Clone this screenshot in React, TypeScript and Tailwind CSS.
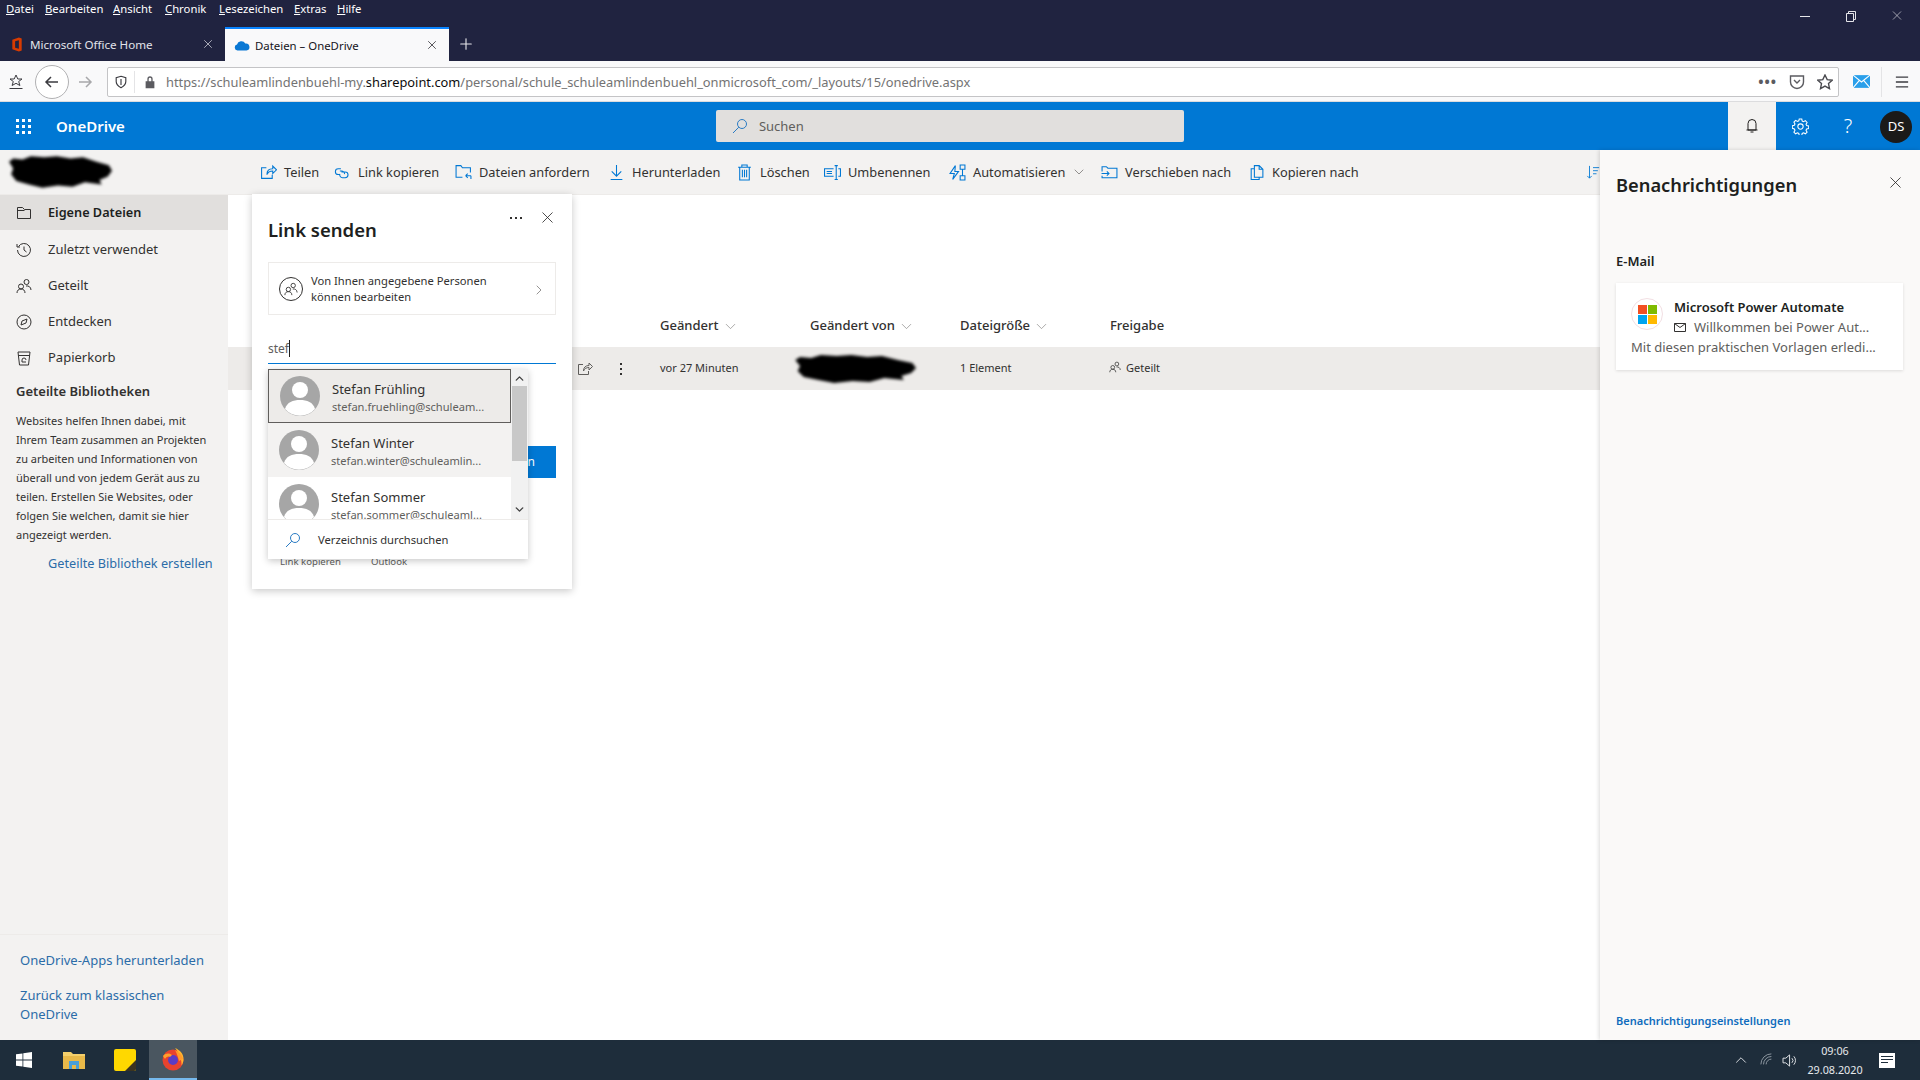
import { ChevronDown, ChevronRight, ChevronUp, Plus, X } from "lucide-react"

const font = "font-['Noto_Sans',sans-serif]"

const Ico = ({ d, className = "w-[17px] h-[17px] text-[#0078d4]" }: { d: string; className?: string }) => (
    <svg viewBox="0 0 16 16" fill="none" stroke="currentColor" strokeWidth="1" className={`shrink-0 ${className}`}>
        <path d={d} />
    </svg>
)

// scribbled-over areas of the screenshot
const Redacted = ({ className }: { className: string }) => (
    <svg viewBox="0 0 100 30" preserveAspectRatio="none" className={`shrink-0 blur-[1.5px] ${className}`}>
        <path d="M1 6L5 3 14 4 22 1 35 2 47 1 60 3 72 2 85 6 97 9 100 14 96 19 88 22 90 26 74 24 62 28 48 27 33 29 20 26 8 23 3 17 5 12z" fill="#000" />
    </svg>
)

const icons = {
    share: "M6 3.500H1.500v10h10V10M6.500 10c0-3.500 2-5.500 5.500-5.500V2l3.500 3.500L12 9V6.500c-2.500 0-4.500 1-5.500 3.500z",
    link: "M6.500 4.500H4a2.700 2.700 0 0 0 0 5.400h1M7 7.500h3.500a2.700 2.700 0 0 1 0 5.400H8a2.700 2.700 0 0 1-2.500-3.500M5.500 6.500h2a2.700 2.700 0 0 1 2.400 3",
    request: "M14.500 8V3.500H7L5.500 1.500h-4.500v11h6M15 11H10M10 11l2-2M10 11l2 2M15 11v3",
    download: "M8 1v10M3.500 7L8 11.500 12.500 7M2.500 14.500h11",
    trash: "M2 3h12M5.500 3V1h5v2M3.500 3v12h9V3M6 5.500v7M8 5.500v7M10 5.500v7",
    rename: "M10 1.500h3M11.500 1.500v13M10 14.500h3M9 4.500H.500v7H9M2.500 7h5M2.500 9h5M13.500 4.500h2v7h-2",
    auto: "M6 1.500L1 9h4l-1.500 5.500L9 7H5.500zM10.500 1h4.500v4h-4.500zM10.500 11h4.500v4h-4.500zM12.700 5v6",
    move: "M1 7V2.500h4l1.500 1.500h8.500v9H1v-2M.500 9h7M5.500 7l2 2-2 2",
    copy: "M6 1.500h4.500l3.500 3.500v7.500H6zM10.500 1.500V5H14M6 4.500H3v10h7.500v-2",
    sort: "M4 1v14M1.500 12.500L4 15l2.500-2.500M8 3h7M8 6.500h5.500M8 10h4",
    folder: "M1.500 13.500v-11h5l2 2h6v9z M1.500 5.500h7",
    clock: "M2.500 4.500A6.500 6.500 0 1 1 1.500 8M1 2v3h3M8 4.500V8l2.500 2",
    people: "M10.500 1.500a2.500 2.500 0 1 1 0 5 2.500 2.500 0 0 1 0-5zM5 6a2.500 2.500 0 1 1 0 5 2.500 2.500 0 0 1 0-5zM1 15c0-2.500 1.500-4 4-4s4 1.500 4 4M10 8c2.500-.5 5 1 5 4",
    compass: "M8 1a7 7 0 1 1 0 14A7 7 0 0 1 8 1zM5 11l1-4 5-2-1 4z",
    bin: "M2 2h12l-1.500 13h-9zM2.500 5.500h11M6 10a2 2 0 0 1 4 0M6 10v2h4",
    search: "M10 1.500a4.500 4.500 0 1 1 0 9 4.500 4.500 0 0 1 0-9zM6.800 9.200L1 15",
}

const menu = [
    { first: "D", rest: "atei", cls: "w-[39px]" },
    { first: "B", rest: "earbeiten", cls: "w-[68px]" },
    { first: "A", rest: "nsicht", cls: "w-[52px]" },
    { first: "C", rest: "hronik", cls: "w-[54px]" },
    { first: "L", rest: "esezeichen", cls: "w-[75px]" },
    { first: "E", rest: "xtras", cls: "w-[43px]" },
    { first: "H", rest: "ilfe", cls: "w-[40px]" },
]

const commands = [
    { label: "Teilen", icon: icons.share, cls: "w-[74px]" },
    { label: "Link kopieren", icon: icons.link, cls: "w-[121px]" },
    { label: "Dateien anfordern", icon: icons.request, cls: "w-[153px]" },
    { label: "Herunterladen", icon: icons.download, cls: "w-[128px]" },
    { label: "Löschen", icon: icons.trash, cls: "w-[88px]" },
    { label: "Umbenennen", icon: icons.rename, cls: "w-[125px]" },
    { label: "Automatisieren", icon: icons.auto, cls: "w-[152px]", more: true },
    { label: "Verschieben nach", icon: icons.move, cls: "w-[147px]" },
    { label: "Kopieren nach", icon: icons.copy, cls: "w-[120px]" },
]

const nav = [
    { label: "Zuletzt verwendet", icon: icons.clock },
    { label: "Geteilt", icon: icons.people },
    { label: "Entdecken", icon: icons.compass },
    { label: "Papierkorb", icon: icons.bin },
]

const columns = [
    { label: "Geändert", cls: "w-[150px]", sort: true },
    { label: "Geändert von", cls: "w-[150px]", sort: true },
    { label: "Dateigröße", cls: "w-[150px]", sort: true },
    { label: "Freigabe", cls: "w-[150px]", sort: false },
]

const people = [
    { name: "Stefan Frühling", mail: "stefan.fruehling@schuleam...", cls: "bg-[#edebe9] border border-[#605e5c]" },
    { name: "Stefan Winter", mail: "stefan.winter@schuleamlin...", cls: "bg-[#f3f2f1]" },
    { name: "Stefan Sommer", mail: "stefan.sommer@schuleaml...", cls: "bg-white" },
]

const Avatar = () => (
    <svg viewBox="0 0 40 40" className="w-10 h-10 shrink-0">
        <circle cx="20" cy="20" r="20" fill="#a6a6a6" />
        <circle cx="20" cy="14" r="8" fill="#fff" />
        <path d="M5 33c2-7 8-9 15-9s13 2 15 9a20 20 0 0 1-30 0z" fill="#fff" />
    </svg>
)

const BrowserChrome = () => (
    <div className="shrink-0">
        <div className="bg-[#202340] h-[61px] relative">
            <div className="flex h-[27px] items-start justify-between">
                <div className="flex pl-[6px] pt-[1px] text-[11.3px] text-white">
                    {menu.map(m => (
                        <span key={m.first} className={m.cls}><span className="underline">{m.first}</span>{m.rest}</span>
                    ))}
                </div>
                <div className="flex items-center text-[#e6e6ea] pt-[8px]">
                    <svg viewBox="0 0 12 12" stroke="currentColor" className="w-[46px] h-[12px]"><path d="M1 6.500h10" /></svg>
                    <svg viewBox="0 0 12 12" fill="none" stroke="currentColor" className="w-[46px] h-[12px]"><path d="M1.500 3.500h7v8h-7zM3.500 3.500v-2h7v8h-2" /></svg>
                    <X size={15} strokeWidth={1} className="w-[46px]" />
                </div>
            </div>
            <div className="flex h-[34px] items-stretch">
                <div className="w-[225px] flex items-center pl-[11px] text-[11.6px] text-[#e2e3ea]">
                    <svg viewBox="0 0 12 16" className="w-[12px] h-[15px] mr-[7px]"><path d="M1 3l7-2.500 3 1v13l-3 1-7-2.500z" fill="#d83b01" /><path d="M4 4.500l4-1v9l-4-1z" fill="#202340" /></svg>
                    <span className="mt-[2px]">Microsoft Office Home</span>
                    <X size={14} strokeWidth={1.2} className="ml-auto mr-[10px]" />
                </div>
                <div className="w-[224px] bg-[#f9f9fa] border-t-2 border-[#0a84ff] flex items-center pl-[9px] text-[11.4px] text-[#15141a]">
                    <svg viewBox="0 0 16 11" className="w-[16px] h-[11px] mr-[5px]"><path d="M3.500 10.500A3 3 0 0 1 3 4.600 4.500 4.500 0 0 1 11.300 3.500 3.500 3.500 0 0 1 12.500 10.500z" fill="#0a78d4" /></svg>
                    <span className="mt-[1px]">Dateien – OneDrive</span>
                    <X size={14} strokeWidth={1.2} className="ml-auto mr-[10px]" />
                </div>
                <div className="w-[34px] flex items-center justify-center text-[#e6e6ea]"><Plus size={18} strokeWidth={1.5} /></div>
            </div>
        </div>
        <div className="h-[41px] bg-[#f9f9fa] flex items-center pl-[8px] pr-[11px] pt-[1px] text-[#3b3b40] border-b border-[#dcdcde]">
            <svg viewBox="0 0 16 16" fill="none" stroke="currentColor" className="w-[16px] h-[16px]"><path d="M8 1l1.800 4H14l-3.300 2.500 1.200 4L8 9.300 4.100 11.500l1.200-4L2 5h4.200zM1.500 14.500h13" /></svg>
            <div className="ml-[11px] w-[34px] h-[34px] rounded-full border border-[#b1b1b3] bg-white flex items-center justify-center">
                <svg viewBox="0 0 16 16" fill="none" stroke="currentColor" strokeWidth="1.500" className="w-[16px] h-[16px]"><path d="M14 8H2M7 3L2 8l5 5" /></svg>
            </div>
            <svg viewBox="0 0 16 16" fill="none" stroke="#a8a8ab" strokeWidth="1.500" className="ml-[8px] w-[16px] h-[16px]"><path d="M2 8h12M9 3l5 5-5 5" /></svg>
            <div className="ml-[14px] flex-1 h-[30px] rounded-[2px] border border-[#c4c4c6] bg-white flex items-center">
                <svg viewBox="0 0 16 16" fill="none" stroke="currentColor" strokeWidth="1.300" className="ml-[6px] w-[14px] h-[14px]"><path d="M8 1.500l5.500 1.500v4.500c0 3-2.500 5.500-5.500 7-3-1.500-5.500-4-5.500-7V3zM8 4.500v7" /></svg>
                <div className="ml-[6px] w-px h-[22px] bg-[#e4e4e6]" />
                <svg viewBox="0 0 16 16" fill="#5b5b60" className="ml-[8px] w-[14px] h-[14px]"><path d="M3 7h10v8H3zM5 7V4.500a3 3 0 0 1 6 0V7H9.500V4.500a1.500 1.500 0 0 0-3 0V7z" /></svg>
                <div className="ml-[9px] mt-[2px] flex-1 text-[12.850px] text-[#737373] whitespace-nowrap">
                    https://schuleamlindenbuehl-my.<span className="text-[#0c0c0d]">sharepoint.com</span>/personal/schule_schuleamlindenbuehl_onmicrosoft_com/_layouts/15/onedrive.aspx
                </div>
                <span className="text-[#5b5b60] text-[14px] font-bold tracking-[1px] mr-[12px]">•••</span>
                <svg viewBox="0 0 16 16" fill="none" stroke="#5b5b60" strokeWidth="1.400" className="w-[16px] h-[16px] mr-[12px]"><path d="M1.500 2h13v6a6.500 6.500 0 0 1-13 0zM5 6l3 3 3-3" /></svg>
                <svg viewBox="0 0 16 16" fill="none" stroke="#4a4a4f" strokeWidth="1.400" className="w-[16px] h-[16px] mr-[5px]"><path d="M8 1l2.200 4.600 5 .6-3.700 3.400 1 5L8 12.100 3.500 14.600l1-5L.800 6.200l5-.6z" /></svg>
            </div>
            <svg viewBox="0 0 16 12" className="ml-[14px] w-[17px] h-[13px]"><path d="M0 0h16v12H0z" fill="#2a9fea" /><path d="M0 0l8 6.500L16 0M0 12l6-7M16 12l-6-7" fill="none" stroke="#fff" /></svg>
            <div className="ml-[11px] w-px h-[30px] bg-[#e4e4e6]" />
            <svg viewBox="0 0 16 16" stroke="#3b3b40" strokeWidth="1.500" className="ml-[13px] w-[14px] h-[16px]"><path d="M1 2.500h14M1 8h14M1 13.500h14" /></svg>
        </div>
    </div>
)

const SuiteBar = () => (
    <div className="h-[48px] shrink-0 bg-[#0078d4] flex items-center text-white relative">
        <div className="grid grid-cols-3 gap-[3px] ml-[16px] w-[15px]">
            {Array.from({ length: 9 }).map((_, i) => <span key={i} className="w-[3px] h-[3px] bg-white" />)}
        </div>
        <span className="ml-[25px] text-[15px] font-semibold">OneDrive</span>
        <div className="ml-[591px] w-[468px] h-[32px] rounded-[2px] bg-[#e1dfdd] flex items-center pl-[16px] text-[13px] text-[#605e5c]">
            <Ico d={icons.search} className="w-4 h-4 text-[#2b7cc4]" />
            <span className="ml-[11px] mt-[2px]">Suchen</span>
        </div>
        <div className="ml-auto flex items-stretch h-full">
            <div className="w-[48px] bg-[#f3f2f1] flex items-center justify-center">
                <svg viewBox="0 0 16 16" fill="none" stroke="#201f1e" className="w-4 h-4"><path d="M4 12V5.500a4 4 0 0 1 8 0V12zM2.500 12h11M6.500 14h3" /></svg>
            </div>
            <div className="w-[48px] flex items-center justify-center">
                <svg viewBox="0 0 16 16" fill="none" stroke="#fff" className="w-[17px] h-[17px]"><path d="M8 5.500a2.500 2.500 0 1 1 0 5 2.500 2.500 0 0 1 0-5zM6.800 1h2.400l.4 1.900 1.300.6 1.700-1 1.600 1.700-1 1.700.6 1.200 1.900.4v2.400l-1.900.4-.6 1.300 1 1.700-1.600 1.600-1.700-1-1.300.6-.4 1.900H6.800l-.4-1.900-1.300-.6-1.700 1-1.600-1.600 1-1.700-.6-1.300L.3 9.600V7.200l1.900-.4.6-1.200-1-1.700 1.600-1.700 1.700 1 1.300-.6z" /></svg>
            </div>
            <div className="w-[48px] flex items-center justify-center text-[20px] font-light">?</div>
            <div className="w-[48px] flex items-center justify-center">
                <span className="w-8 h-8 rounded-full bg-[#1b1a19] flex items-center justify-center text-[13px] mt-[1px]">DS</span>
            </div>
        </div>
    </div>
)

const CommandBar = () => (
    <div className="h-[45px] shrink-0 bg-[#f3f2f1] border-b border-[#edebe9] flex items-center relative text-[12.800px] text-[#323130]">
        <Redacted className="w-[104px] h-[34px] ml-[8px]" />
        <div className="ml-[148px] flex items-center">
            {commands.map(c => (
                <div key={c.label} className={`flex items-center gap-[7px] ${c.cls}`}>
                    <Ico d={c.icon} />
                    <span className="whitespace-nowrap mt-[2px]">{c.label}</span>
                    {c.more && <ChevronDown size={16} strokeWidth={1} className="-ml-[1px] text-[#605e5c]" />}
                </div>
            ))}
        </div>
        <Ico d={icons.sort} className="ml-auto w-[14px] h-4 text-[#0078d4]" />
    </div>
)

const Sidebar = () => (
    <aside className="w-[228px] shrink-0 bg-[#f3f2f1] flex flex-col justify-between text-[#323130]">
        <div>
            <div className="h-[35px] bg-[#e1dfdd] flex items-center gap-[16px] pl-[16px] text-[12.7px] font-semibold text-[#201f1e]">
                <Ico d={icons.folder} className="w-4 h-4 text-[#323130]" />
                Eigene Dateien
            </div>
            <ul className="pt-[2px]">
                {nav.map(n => (
                    <li key={n.label} className="h-[36px] flex items-center gap-[16px] pl-[16px] text-[13px]">
                        <Ico d={n.icon} className="w-4 h-4 text-[#323130]" />
                        {n.label}
                    </li>
                ))}
            </ul>
            <h3 className="pl-[16px] mt-[5px] text-[13px] font-semibold leading-[20px]">Geteilte Bibliotheken</h3>
            <p className="pl-[16px] pr-[10px] mt-[10px] text-[11px] leading-[19px]">
                Websites helfen Ihnen dabei, mit<br />
                Ihrem Team zusammen an Projekten<br />
                zu arbeiten und Informationen von<br />
                überall und von jedem Gerät aus zu<br />
                teilen. Erstellen Sie Websites, oder<br />
                folgen Sie welchen, damit sie hier<br />
                angezeigt werden.
            </p>
            <div className="mt-[10px] pl-[48px] text-[12.7px] text-[#2b6ca8] whitespace-nowrap">Geteilte Bibliothek erstellen</div>
        </div>
        <div className="border-t border-[#edebe9] pl-[20px] pt-[16px] pb-[16px] text-[13px] leading-[19px] text-[#2b6ca8]">
            <div>OneDrive-Apps herunterladen</div>
            <div className="mt-[16px]">Zurück zum klassischen<br />OneDrive</div>
        </div>
    </aside>
)

const FileTable = () => (
    <main className="flex-1 bg-white pt-[110px]">
        <div className="h-[42px] flex items-center pl-[432px] text-[13px] text-[#323130]">
            {columns.map(c => (
                <div key={c.label} className={`flex items-center gap-[3px] ${c.cls}`}>
                    <span className="font-medium">{c.label}</span>
                    {c.sort && <ChevronDown size={17} strokeWidth={1} className="text-[#8a8886]" />}
                </div>
            ))}
        </div>
        <div className="h-[43px] bg-[#edebe9] flex items-center text-[11px] text-[#323130]">
            <div className="w-[432px] flex items-center pl-[349px] text-[#605e5c]">
                <Ico d={icons.share} className="w-4 h-4 text-[#605e5c]" />
                <span className="ml-[27px] flex flex-col gap-[3px]">
                    <i className="w-[2px] h-[2px] bg-[#323130]" /><i className="w-[2px] h-[2px] bg-[#323130]" /><i className="w-[2px] h-[2px] bg-[#323130]" />
                </span>
            </div>
            <div className="w-[150px]">vor 27 Minuten</div>
            <div className="w-[150px]"><Redacted className="w-[122px] h-[30px] -ml-[16px]" /></div>
            <div className="w-[150px]">1 Element</div>
            <div className="w-[150px] flex items-center gap-[6px]">
                <Ico d={icons.people} className="w-3 h-3 text-[#323130] -mt-[3px] -ml-[1px]" />
                <span className="-ml-[1px]">Geteilt</span>
            </div>
        </div>
    </main>
)

const NotificationPanel = () => (
    <aside className="w-[320px] shrink-0 bg-[#faf9f8] shadow-[-1px_0_4px_rgba(0,0,0,0.15)] flex flex-col justify-between px-[16px] relative z-10 text-[#201f1e]">
        <div>
            <div className="flex items-center justify-between pt-[20px]">
                <h2 className="text-[18.300px] font-semibold leading-[30px]">Benachrichtigungen</h2>
                <X size={19} strokeWidth={1} className="-mt-[6px] -mr-[1px]" />
            </div>
            <h3 className="mt-[51px] text-[13px] font-semibold leading-[20px]">E-Mail</h3>
            <div className="mt-[12px] w-[287px] h-[87px] bg-white shadow-[0_1px_3px_rgba(0,0,0,0.12)] pl-[15px] pt-[15px]">
                <div className="flex gap-[11px]">
                    <div className="w-8 h-8 rounded-full border border-[#f2dfe3] flex items-center justify-center shrink-0">
                        <div className="grid grid-cols-2 gap-[1px] w-[19px]">
                            <i className="h-[9px] bg-[#f25022]" /><i className="h-[9px] bg-[#7fba00]" /><i className="h-[9px] bg-[#00a4ef]" /><i className="h-[9px] bg-[#ffb900]" />
                        </div>
                    </div>
                    <div className="min-w-0 whitespace-nowrap">
                        <div className="text-[13px] font-semibold leading-[19px]">Microsoft Power Automate</div>
                        <div className="flex items-center gap-[8px] text-[13px] text-[#605e5c] leading-[21px]">
                            <svg viewBox="0 0 12 9" fill="none" stroke="#323130" className="w-3 h-[9px]"><path d="M.5.5h11v8H.5zM.5.5l5.500 4 5.500-4" /></svg>
                            Willkommen bei Power Aut...
                        </div>
                    </div>
                </div>
                <div className="text-[13px] text-[#605e5c] leading-[20px] -mt-[1px] whitespace-nowrap">Mit diesen praktischen Vorlagen erledi...</div>
            </div>
        </div>
        <div className="pb-[11px] text-[11px] font-semibold text-[#0f6cbd]">Benachrichtigungseinstellungen</div>
    </aside>
)

const ShareDialog = () => (
    <div className="absolute left-[252px] top-[194px] w-[320px] h-[395px] bg-white shadow-[0_2px_8px_rgba(0,0,0,0.22)] px-[16px] z-20 text-[#323130]">
        <div className="flex items-start justify-between">
            <h2 className="mt-[19px] text-[18.500px] font-semibold leading-[34px] text-[#201f1e]">Link senden</h2>
            <div className="flex items-center mt-[14px] -mr-[1px] gap-[16px]">
                <span className="flex gap-[3px]">
                    <i className="w-[2px] h-[2px] bg-[#323130]" /><i className="w-[2px] h-[2px] bg-[#323130]" /><i className="w-[2px] h-[2px] bg-[#323130]" />
                </span>
                <X size={19} strokeWidth={1} className="text-[#201f1e]" />
            </div>
        </div>
        <div className="mt-[15px] h-[53px] border border-[#edebe9] flex items-center pl-[10px] pr-[8px]">
            <div className="w-6 h-6 rounded-full border border-[#323130] flex items-center justify-center shrink-0">
                <Ico d={icons.people} className="w-[14px] h-[14px] text-[#323130]" />
            </div>
            <div className="ml-[8px] mt-[1px] text-[11.2px] leading-[16px] whitespace-nowrap">Von Ihnen angegebene Personen<br />können bearbeiten</div>
            <ChevronRight size={16} strokeWidth={1} className="ml-auto text-[#605e5c] mt-[2px]" />
        </div>
        <div className="mt-[20px] h-[29px] border-b border-[#0078d4] text-[12px] text-[#605e5c] flex items-start leading-[28px]">
            stef<span className="w-px h-[17px] mt-[5px] bg-[#201f1e]" />
        </div>
        <div className="absolute left-[210px] right-[16px] top-[252px] h-[32px] bg-[#0078d4] flex items-center justify-end pr-[21px] text-[12px] text-white">n</div>
        <div className="absolute left-[28px] top-[361px] flex text-[9.600px] text-[#605e5c]">
            <span className="w-[91px]">Link kopieren</span>
            <span>Outlook</span>
        </div>
        <div className="absolute left-[16px] top-[175px] w-[260px] h-[190px] bg-white shadow-[0_2px_7px_rgba(0,0,0,0.22)] flex flex-col z-10">
            <div className="h-[150px] overflow-hidden flex">
                <div className="w-[243px]">
                    {people.map(p => (
                        <div key={p.name} className={`h-[54px] flex items-center pl-[11px] ${p.cls}`}>
                            <Avatar />
                            <div className="ml-[12px] pt-[2px] whitespace-nowrap">
                                <div className="text-[13px] leading-[18px] text-[#323130]">{p.name}</div>
                                <div className="text-[11.100px] leading-[17px] text-[#605e5c]">{p.mail}</div>
                            </div>
                        </div>
                    ))}
                </div>
                <div className="w-[17px] bg-[#f1f1f1] flex flex-col items-center">
                    <ChevronUp size={13} strokeWidth={2.5} className="mt-[3px] text-[#404040]" />
                    <div className="w-[15px] h-[75px] mt-[1px] bg-[#c8c8c8]" />
                    <ChevronDown size={13} strokeWidth={2.5} className="mt-auto mb-[3px] text-[#404040]" />
                </div>
            </div>
            <div className="flex-1 border-t border-[#edebe9] flex items-center pl-[17px] text-[11.200px] text-[#323130]">
                <Ico d={icons.search} className="w-4 h-4 text-[#2b7cc4]" />
                <span className="ml-[17px] mt-[1px]">Verzeichnis durchsuchen</span>
            </div>
        </div>
    </div>
)

const Taskbar = () => (
    <footer className="h-[40px] shrink-0 bg-[#1e2d3b] flex items-stretch text-[#e6e9ec]">
        <div className="w-[47px] flex items-center justify-center">
            <svg viewBox="0 0 16 16" fill="#fff" className="w-[16px] h-[16px]"><path d="M0 2.300l6.500-.9v6.200H0zM7.300 1.300L16 0v7.600H7.300zM0 8.400h6.500v6.200L0 13.700zM7.300 8.400H16V16l-8.700-1.300z" /></svg>
        </div>
        <div className="w-[53px] flex items-center justify-center">
            <svg viewBox="0 0 22 18" className="w-[22px] h-[18px]"><path d="M0 1h8l2 2h12v15H0z" fill="#f4cf6b" /><path d="M0 5h22v13H0z" fill="#e9b949" /><path d="M6 10h10v8h-3v-4H9v4H6z" fill="#4a9fd8" /></svg>
        </div>
        <div className="w-[49px] flex items-center justify-center">
            <svg viewBox="0 0 22 22" className="w-[22px] h-[22px]"><rect width="22" height="22" rx="2" fill="#ffd800" /><path d="M22 11L11 22h9a2 2 0 0 0 2-2z" fill="#3b3320" /></svg>
        </div>
        <div className="w-[48px] bg-[#4a5660] border-b-2 border-[#76b9ed] flex items-center justify-center">
            <svg viewBox="0 0 24 24" className="w-[24px] h-[24px]">
                <circle cx="12" cy="13" r="10.500" fill="#e8432e" />
                <path d="M14 1c5 2 9 6 8.500 12-.2 2-1 4-2 5.500C21 14 19 7 14 1z" fill="#ffb52e" />
                <path d="M14 3c4 2 7 5 8 9l-4 2c-1-4-2-7-4-11z" fill="#ff9a2b" />
                <circle cx="12" cy="13" r="5" fill="#5b3cc4" />
                <path d="M2 9c3-3 6-3 9-1l-2 2C7 9 5 10 4 12z" fill="#ffa02b" />
            </svg>
        </div>
        <div className="ml-auto flex items-center pr-[4px]">
            <ChevronUp size={18} strokeWidth={1.2} />
            <svg viewBox="0 0 16 16" fill="none" stroke="#9aa4ad" className="ml-[10px] w-[14px] h-[14px]"><path d="M1 13a12 12 0 0 1 12-12M4 13a9 9 0 0 1 9-9M7 13a6 6 0 0 1 6-6" /></svg>
            <svg viewBox="0 0 18 16" fill="none" stroke="currentColor" className="ml-[8px] w-[17px] h-[15px]"><path d="M1 5.500h3L8 2v12l-4-3.500H1zM10.500 5.500a3.500 3.500 0 0 1 0 5M12.500 3.500a6.500 6.500 0 0 1 0 9" /></svg>
            <div className="ml-[5px] w-[62px] text-center text-[10.800px] leading-[19px]">09:06<br />29.08.2020</div>
            <div className="ml-[13px] mr-[21px] w-[16px] h-[15px] bg-white flex flex-col gap-[2px] px-[2px] pt-[3px]">
                <i className="h-px bg-[#1e2d3b]" /><i className="h-px bg-[#1e2d3b]" /><i className="h-px w-[7px] bg-[#1e2d3b]" />
            </div>
        </div>
    </footer>
)

const App = () => {
    return (
        <div className={`relative w-[1920px] h-[1080px] overflow-hidden flex flex-col bg-white ${font}`}>
            <BrowserChrome />
            <SuiteBar />
            <div className="flex-1 flex min-h-0">
                <div className="flex-1 flex flex-col min-w-0">
                    <CommandBar />
                    <div className="flex-1 flex min-h-0">
                        <Sidebar />
                        <FileTable />
                    </div>
                </div>
                <NotificationPanel />
            </div>
            <Taskbar />
            <ShareDialog />
        </div>
    )
}

export default App
